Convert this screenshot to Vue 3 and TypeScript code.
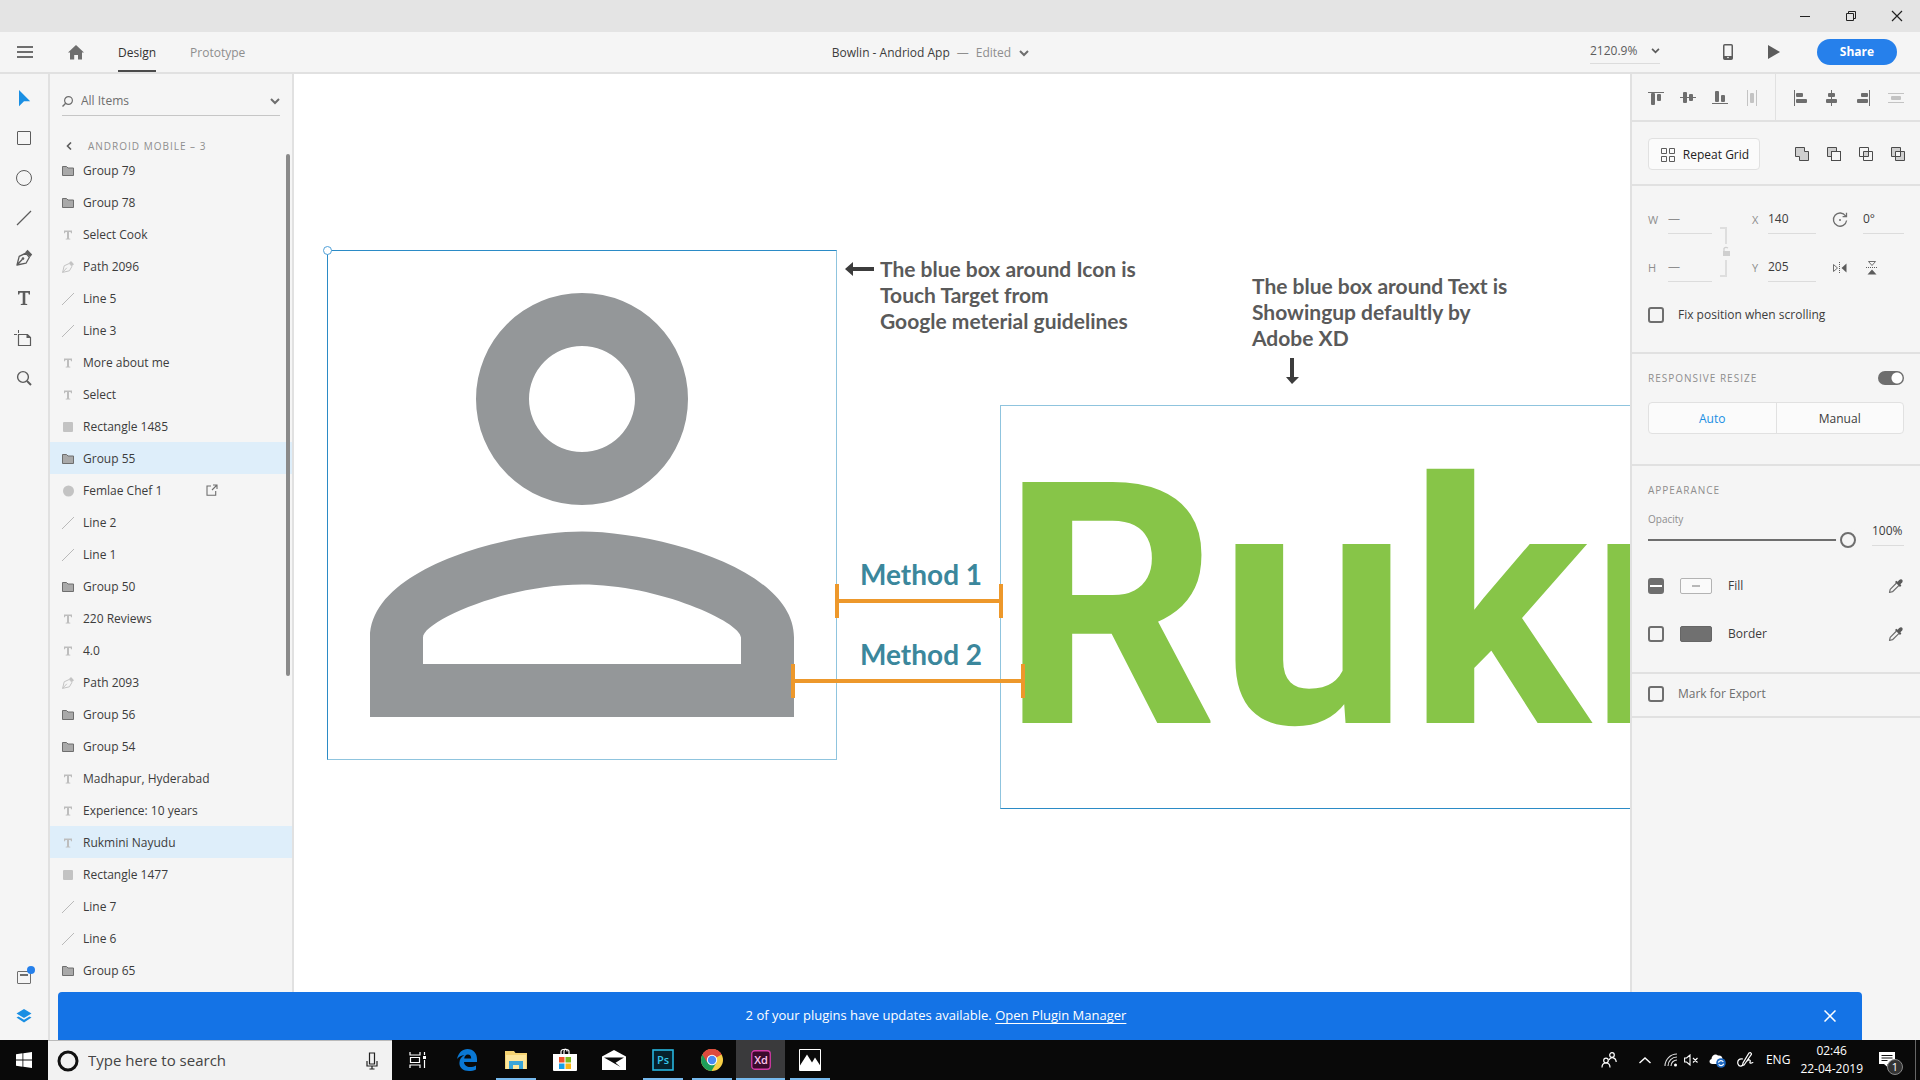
<script setup lang="ts">
import { ref } from 'vue'

type Kind = 'folder' | 'text' | 'pen' | 'line' | 'rect' | 'ellipse'
interface Layer { name: string; kind: Kind; selected?: boolean; linked?: boolean }

const layers: Layer[] = [
  { name: 'Group 79', kind: 'folder' },
  { name: 'Group 78', kind: 'folder' },
  { name: 'Select Cook', kind: 'text' },
  { name: 'Path 2096', kind: 'pen' },
  { name: 'Line 5', kind: 'line' },
  { name: 'Line 3', kind: 'line' },
  { name: 'More about me', kind: 'text' },
  { name: 'Select', kind: 'text' },
  { name: 'Rectangle 1485', kind: 'rect' },
  { name: 'Group 55', kind: 'folder', selected: true },
  { name: 'Femlae Chef 1', kind: 'ellipse', linked: true },
  { name: 'Line 2', kind: 'line' },
  { name: 'Line 1', kind: 'line' },
  { name: 'Group 50', kind: 'folder' },
  { name: '220 Reviews', kind: 'text' },
  { name: '4.0', kind: 'text' },
  { name: 'Path 2093', kind: 'pen' },
  { name: 'Group 56', kind: 'folder' },
  { name: 'Group 54', kind: 'folder' },
  { name: 'Madhapur, Hyderabad', kind: 'text' },
  { name: 'Experience: 10 years', kind: 'text' },
  { name: 'Rukmini Nayudu', kind: 'text', selected: true },
  { name: 'Rectangle 1477', kind: 'rect' },
  { name: 'Line 7', kind: 'line' },
  { name: 'Line 6', kind: 'line' },
  { name: 'Group 65', kind: 'folder' },
]

const tools = ['select', 'rect', 'ellipse', 'line', 'pen', 'text', 'artboard', 'zoom']
const alignVertical = ['top', 'middle', 'bottom', 'spread-h']
const alignHorizontal = ['left', 'center', 'right', 'spread-v']
const booleans = ['add', 'subtract', 'intersect', 'exclude']

const filter = ref('All Items')
const opacity = ref(100)
const responsive = ref(true)
</script>

<template>
  <div class="window">
    <svg class="defs" aria-hidden="true">
      <symbol id="chevron" viewBox="0 0 10 7"><path d="M1 1l4 4 4-4" fill="none" stroke="currentColor" stroke-width="2" /></symbol>
      <symbol id="t-select" viewBox="0 0 24 24"><path d="M7 4v16.200l5-5h6.200z" fill="#1a8fe3" /></symbol>
      <symbol id="t-rect" viewBox="0 0 24 24"><rect x="5.500" y="5.500" width="13" height="13" rx=".5" fill="none" stroke="currentColor" /></symbol>
      <symbol id="t-ellipse" viewBox="0 0 24 24"><circle cx="12" cy="12" r="7.500" fill="none" stroke="currentColor" /></symbol>
      <symbol id="t-line" viewBox="0 0 24 24"><path d="M5 19L19 5" stroke="currentColor" stroke-width="1.200" /></symbol>
      <symbol id="t-pen" viewBox="0 0 24 24">
        <path d="M5 19l2.200-8.600 6.600-3.200 3.600 4-3.400 6z M5 19l5.400-5.800" fill="none" stroke="currentColor" stroke-width="1.300" stroke-linejoin="round" />
        <circle cx="11" cy="12.600" r="1.300" fill="currentColor" /><path d="M13.200 6.200l2.300-2.400 4.700 4.600-2 2.700z" fill="currentColor" />
      </symbol>
      <symbol id="t-text" viewBox="0 0 24 24"><path d="M6 5h12v3.600h-1.200l-.6-1.800H13.300v11l1.900.2V19H8.800v-1l1.900-.2v-11H7.800l-.6 1.800H6z" fill="currentColor" /></symbol>
      <symbol id="t-artboard" viewBox="0 0 24 24">
        <path d="M6.500 8.500h9l3 3v8h-12z" fill="none" stroke="currentColor" stroke-width="1.200" /><path d="M14.500 8v4H19zM6 4h1v3H6zM2 8h3v1H2z" fill="currentColor" />
      </symbol>
      <symbol id="t-zoom" viewBox="0 0 24 24"><circle cx="11" cy="11" r="5.400" fill="none" stroke="currentColor" stroke-width="1.400" /><path d="M15 15l4 4" stroke="currentColor" stroke-width="2" /></symbol>
      <symbol id="l-folder" viewBox="0 0 12 12"><path d="M.5 1.500h4l1.500 1.500h5.500v7.500H.5z" fill="#a9a9a9" stroke="#6e6e6e" /></symbol>
      <symbol id="l-text" viewBox="0 0 12 12"><path d="M2 1.500h8v2.800H9l-.4-1.400H7v6.500l1.300.3v.8H3.700v-.8L5 9.400V2.900H3.400L3 4.300H2z" fill="#bdbdbd" /></symbol>
      <symbol id="l-pen" viewBox="0 0 12 12"><path d="M.6 11.400l1.600-6.600 5-2.300L10 5.300l-2.600 4.500zM.6 11.400l4.200-4.600" fill="none" stroke="#c3c3c3" /><path d="M7 2l2-2 3 3.200L10 5z" fill="#c3c3c3" /></symbol>
      <symbol id="l-line" viewBox="0 0 12 12"><path d="M0 12L12 0" stroke="#b9b9b9" /></symbol>
      <symbol id="l-rect" viewBox="0 0 12 12"><rect x="1" y="1" width="10" height="10" rx="1" fill="#c3c3c3" /></symbol>
      <symbol id="l-ellipse" viewBox="0 0 12 12"><circle cx="6.500" cy="6" r="5.500" fill="#c3c3c3" /></symbol>
      <symbol id="a-top" viewBox="0 0 16 16"><path d="M0 2h16v1H0z" fill="currentColor" /><rect x="3" y="3" width="4" height="12" rx="1" fill="currentColor" /><rect x="9" y="4" width="4" height="7" rx="1" fill="currentColor" /></symbol>
      <symbol id="a-middle" viewBox="0 0 16 16"><path d="M0 7h16v1H0z" fill="currentColor" /><rect x="3" y="2" width="4" height="11" rx="1" fill="currentColor" /><rect x="9" y="4" width="4" height="7" rx="1" fill="currentColor" /></symbol>
      <symbol id="a-bottom" viewBox="0 0 16 16"><path d="M0 13h16v1H0z" fill="currentColor" /><rect x="3" y="1" width="4" height="11" rx="1" fill="currentColor" /><rect x="9" y="5" width="4" height="7" rx="1" fill="currentColor" /></symbol>
      <symbol id="a-spread-h" viewBox="0 0 16 16"><path d="M3 0h1v16H3zM12 0h1v16h-1z" fill="#c3c3c3" /><rect x="6" y="3" width="4" height="10" rx="1" fill="#c3c3c3" /></symbol>
      <symbol id="a-left" viewBox="0 0 16 16"><path d="M2 0h1v16H2z" fill="currentColor" /><rect x="4" y="3" width="7" height="4" rx="1" fill="currentColor" /><rect x="4" y="9" width="11" height="4" rx="1" fill="currentColor" /></symbol>
      <symbol id="a-center" viewBox="0 0 16 16"><path d="M7 0h1v16H7z" fill="currentColor" /><rect x="4" y="3" width="7" height="4" rx="1" fill="currentColor" /><rect x="2" y="9" width="11" height="4" rx="1" fill="currentColor" /></symbol>
      <symbol id="a-right" viewBox="0 0 16 16"><path d="M13 0h1v16h-1z" fill="currentColor" /><rect x="5" y="3" width="7" height="4" rx="1" fill="currentColor" /><rect x="1" y="9" width="11" height="4" rx="1" fill="currentColor" /></symbol>
      <symbol id="a-spread-v" viewBox="0 0 16 16"><path d="M0 3h16v1H0zM0 12h16v1H0z" fill="#c3c3c3" /><rect x="3" y="6" width="10" height="4" rx="1" fill="#c3c3c3" /></symbol>
      <symbol id="b-add" viewBox="0 0 16 16"><path d="M1.500 1.500h9v4h4v9h-9v-4h-4z" fill="#cfcfcf" stroke="#4b4b4b" stroke-linejoin="round" /></symbol>
      <symbol id="b-subtract" viewBox="0 0 16 16"><path d="M1.500 1.500h9v4h-5v5h-4z" fill="#cfcfcf" stroke="#4b4b4b" /><rect x="5.500" y="5.500" width="9" height="9" fill="#f5f5f5" stroke="#4b4b4b" /></symbol>
      <symbol id="b-intersect" viewBox="0 0 16 16"><path d="M5.500 5.500h5v5h-5z" fill="#cfcfcf" /><path d="M1.500 1.500h9v9h-9zM5.500 5.500h9v9h-9z" fill="none" stroke="#4b4b4b" /></symbol>
      <symbol id="b-exclude" viewBox="0 0 16 16"><path d="M1.500 1.500h9v9h-9zM5.500 5.500h9v9h-9z" fill="#cfcfcf" /><path d="M5.500 5.500h5v5h-5z" fill="#f5f5f5" /><path d="M1.500 1.500h9v9h-9zM5.500 5.500h9v9h-9z" fill="none" stroke="#4b4b4b" /></symbol>
      <symbol id="dropper" viewBox="0 0 16 16"><path d="M8.500 5L2.200 11.300 1.500 14.500l3-.8L11 7.400" fill="none" stroke="#6e6e6e" stroke-width="1.200" stroke-linejoin="round" /><path d="M7 4l1.300-1.200 1.300 1L11.200 2c2-2 4.600 0 3 2.400L12.400 6.200l1 1.300L12 8.900z" fill="#5a5a5a" /></symbol>
    </svg>

    <div class="titlebar">
      <button aria-label="Minimize"><svg width="12" height="12" viewBox="0 0 12 12"><path d="M1 6.500h10" stroke="#222" /></svg></button>
      <button aria-label="Restore"><svg width="12" height="12" viewBox="0 0 12 12"><path d="M1.500 3.500h7v7h-7zM3.500 3.500v-2h7v7h-2" fill="none" stroke="#222" /></svg></button>
      <button aria-label="Close"><svg width="12" height="12" viewBox="0 0 12 12"><path d="M1 1l10 10M11 1L1 11" stroke="#222" stroke-width="1.200" /></svg></button>
    </div>

    <header class="header">
      <div class="header-side">
        <button class="menu" aria-label="Menu"><svg width="16" height="12" viewBox="0 0 16 12"><path d="M0 1h16M0 6h16M0 11h16" stroke="#6e6e6e" stroke-width="2" /></svg></button>
        <button class="home" aria-label="Home"><svg width="16" height="15" viewBox="0 0 16 15"><path d="M8 0l8 7.600h-2V14.500h-4V10H6.200v4.500H2V7.600H0z" fill="#6e6e6e" /></svg></button>
        <button class="mode current">Design</button>
        <button class="mode">Prototype</button>
      </div>
      <div class="doc">
        <span>Bowlin - Andriod App</span><span class="muted">—</span><span class="muted">Edited</span>
        <button aria-label="Document menu"><svg width="10" height="7"><use href="#chevron" /></svg></button>
      </div>
      <div class="header-side end">
        <div class="zoom">
          <select aria-label="Zoom level"><option>2120.9%</option></select>
          <svg width="9" height="6"><use href="#chevron" /></svg>
        </div>
        <button class="device" aria-label="Device preview"><svg width="10" height="16" viewBox="0 0 10 16"><rect x=".75" y=".75" width="8.500" height="14.500" rx="1" fill="none" stroke="#5c5c5c" stroke-width="1.500" /><path d="M1 12h8v3H1z" fill="#5c5c5c" /><circle cx="5" cy="13.500" r=".8" fill="#fff" /></svg></button>
        <button class="play" aria-label="Play"><svg width="12" height="14" viewBox="0 0 12 14"><path d="M0 0l12 7-12 7z" fill="#5c5c5c" /></svg></button>
        <button class="share">Share</button>
      </div>
    </header>

    <main class="body">
      <nav class="rail">
        <button v-for="tool in tools" :key="tool" :aria-label="tool"><svg width="24" height="24"><use :href="'#t-' + tool" /></svg></button>
        <button class="push" aria-label="Plugins">
          <svg width="24" height="24" viewBox="0 0 24 24"><rect x="5.500" y="7.500" width="13" height="12" rx=".5" fill="none" stroke="#6e6e6e" /><path d="M8 11h8" stroke="#6e6e6e" stroke-width="2" /><circle cx="19" cy="6" r="4" fill="#2680eb" /></svg>
        </button>
        <button aria-label="Layers">
          <svg width="24" height="24" viewBox="0 0 24 24"><path d="M12 5l7.500 4.500L12 14 4.500 9.500zM4.500 13.600l2-1.100L12 15.800l5.500-3.300 2 1.100L12 18.500z" fill="#1a8fe3" /></svg>
        </button>
      </nav>

      <aside class="layers">
        <div class="filter">
          <svg width="11" height="11" viewBox="0 0 11 11"><circle cx="6.500" cy="4.500" r="3.900" fill="none" stroke="#6e6e6e" stroke-width="1.200" /><path d="M3.700 7.300L.5 10.500" stroke="#6e6e6e" stroke-width="1.400" /></svg>
          <input v-model="filter" aria-label="Filter layers" />
          <button aria-label="Filter options"><svg width="10" height="7"><use href="#chevron" /></svg></button>
        </div>
        <div class="crumb">
          <button aria-label="Back"><svg width="6" height="8" viewBox="0 0 6 8"><path d="M5 .5L1.500 4 5 7.500" fill="none" stroke="#5c5c5c" stroke-width="1.600" /></svg></button>
          <span>ANDROID MOBILE – 3</span>
        </div>
        <ul class="list">
          <li v-for="layer in layers" :key="layer.name" :class="{ selected: layer.selected }">
            <svg width="12" height="12"><use :href="'#l-' + layer.kind" /></svg>
            <span>{{ layer.name }}</span>
            <svg v-if="layer.linked" class="linked" width="12" height="12" viewBox="0 0 12 12"><path d="M5 2H1v9.300h8.700V7M7 1h4v4M11 1L6 6" fill="none" stroke="#6e6e6e" stroke-width="1.100" /></svg>
          </li>
        </ul>
        <div class="scrollbar"></div>
      </aside>

      <section class="canvas">
        <div class="touch-target"></div>
        <svg class="person" width="424" height="424" viewBox="4 4 16 16">
          <path fill="#949799" fill-rule="evenodd" d="M12 4a4 4 0 1 1 0 8 4 4 0 0 1 0-8zm0 2a2 2 0 1 0 0 4 2 2 0 0 0 0-4zM12 13c-2.670 0-8 1.340-8 4v3h16v-3c0-2.660-5.330-4-8-4zm0 2c2.900 0 6 1.420 6 2v1H6v-1c0-.6 3.100-2 6-2z" />
        </svg>
        <div class="name-box">Rukm</div>
        <svg class="marks" width="1336" height="918" viewBox="294 74 1336 918">
          <g stroke="#ed982b" stroke-width="4" fill="none">
            <path d="M837 584v34M1001 584v34M837 601h164" />
            <path d="M793 664v34M1023 664v34M793 681h230" />
          </g>
          <path d="M845 269l8-7v5h21v4h-21v5z" fill="#3c3c3c" />
          <path d="M1290 358h4v19h5l-7 7-6-7h4z" fill="#3c3c3c" />
          <circle cx="327.500" cy="250.500" r="4" fill="#fff" stroke="#4fa0d8" />
        </svg>
        <p class="note icon-note">The blue box around Icon is<br />Touch Target from<br />Google meterial guidelines</p>
        <p class="note text-note">The blue box around Text is<br />Showingup defaultly by<br />Adobe XD</p>
        <p class="method first">Method 1</p>
        <p class="method second">Method 2</p>
      </section>

      <aside class="inspector">
        <div class="align">
          <div class="align-group"><button v-for="a in alignVertical" :key="a" :aria-label="a"><svg width="16" height="16"><use :href="'#a-' + a" /></svg></button></div>
          <div class="align-group"><button v-for="a in alignHorizontal" :key="a" :aria-label="a"><svg width="16" height="16"><use :href="'#a-' + a" /></svg></button></div>
        </div>

        <div class="repeat">
          <button class="repeat-grid">
            <svg width="14" height="14" viewBox="0 0 14 14"><path d="M.5.5h5v5h-5zM8.500.5h5v5h-5zM.5 8.500h5v5h-5zM8.500 8.500h5v5h-5z" fill="none" stroke="#5c5c5c" /></svg>
            Repeat Grid
          </button>
          <div class="ops"><button v-for="b in booleans" :key="b" :aria-label="b"><svg width="16" height="16"><use :href="'#b-' + b" /></svg></button></div>
        </div>

        <div class="geometry">
          <div class="transform">
            <div class="pair size">
              <label><span>W</span><input value="—" /></label>
              <label><span>H</span><input value="—" /></label>
            </div>
            <svg class="lock" width="10" height="50" viewBox="0 0 10 50"><path d="M0 1h6v16M0 49h6V33" fill="none" stroke="#dedede" stroke-width="2" /><path d="M3 24h7v5H3z" fill="#cfcfcf" /><path d="M4 24v-2.500q1.500-2 4-.5" fill="none" stroke="#cfcfcf" stroke-width="1.300" /></svg>
            <div class="pair place">
              <label><span>X</span><input value="140" /></label>
              <label><span>Y</span><input value="205" /></label>
            </div>
            <div class="pair turn">
              <label aria-label="Rotation">
                <svg width="16" height="16" viewBox="0 0 16 16"><path d="M13.600 4A6.600 6.600 0 1 0 14.600 8.500M14.500.8v3.900h-3.900" fill="none" stroke="#6e6e6e" stroke-width="1.300" /><circle cx="8" cy="8" r="1" fill="#6e6e6e" /></svg>
                <input value="0°" />
              </label>
              <div class="flips">
                <button aria-label="Flip horizontally"><svg width="16" height="16" viewBox="0 0 16 16"><path d="M1.500 4.500v7l4-3.500z" fill="none" stroke="#6e6e6e" /><path d="M14.500 3.500v9L9.500 8z" fill="#5c5c5c" /><path d="M7.500 2v12" stroke="#5c5c5c" stroke-dasharray="1 1" /></svg></button>
                <button aria-label="Flip vertically"><svg width="16" height="16" viewBox="0 0 16 16"><path d="M4.500 1.500h7L8 5.500z" fill="none" stroke="#6e6e6e" /><path d="M3.500 14.500h9L8 9.500z" fill="#5c5c5c" /><path d="M2 7.500h12" stroke="#5c5c5c" stroke-dasharray="1 1" /></svg></button>
              </div>
            </div>
          </div>
          <label class="check"><input type="checkbox" />Fix position when scrolling</label>
        </div>

        <div class="responsive">
          <div class="heading-row"><h2 id="resize">RESPONSIVE RESIZE</h2><input v-model="responsive" type="checkbox" class="switch" aria-labelledby="resize" /></div>
          <div class="segments"><button class="on">Auto</button><button>Manual</button></div>
        </div>

        <div class="appearance">
          <h2>APPEARANCE</h2>
          <div class="opacity">
            <div class="slider"><label for="opacity">Opacity</label><input id="opacity" v-model.number="opacity" type="range" min="0" max="100" /></div>
            <input class="value" :value="opacity + '%'" aria-label="Opacity value" />
          </div>
          <div class="paint">
            <input id="fill" type="checkbox" class="mixed" :indeterminate.prop="true" />
            <button class="swatch empty" aria-label="Fill colour"></button>
            <label for="fill">Fill</label>
            <button class="pick" aria-label="Pick fill"><svg width="16" height="16"><use href="#dropper" /></svg></button>
          </div>
          <div class="paint">
            <input id="border" type="checkbox" />
            <button class="swatch" aria-label="Border colour"></button>
            <label for="border">Border</label>
            <button class="pick" aria-label="Pick border"><svg width="16" height="16"><use href="#dropper" /></svg></button>
          </div>
        </div>

        <div class="export"><label class="check"><input type="checkbox" />Mark for Export</label></div>
      </aside>
    </main>

    <div class="banner">
      <p>2 of your plugins have updates available. <a href="#">Open Plugin Manager</a></p>
      <button aria-label="Dismiss"><svg width="12" height="12" viewBox="0 0 12 12"><path d="M.5.5l11 11M11.500.5l-11 11" stroke="#fff" stroke-width="1.500" /></svg></button>
    </div>

    <footer class="taskbar">
      <button class="start" aria-label="Start"><svg width="16" height="16" viewBox="0 0 16 16"><path d="M0 2.200L6.500 1.300v6.300H0zM7.300 1.200L16 0v7.600H7.300zM0 8.400h6.500v6.300L0 13.800zM7.300 8.400H16V16l-8.700-1.200z" fill="#fff" /></svg></button>
      <div class="search">
        <svg width="22" height="22" viewBox="0 0 22 22"><circle cx="11" cy="11" r="9" fill="none" stroke="#111" stroke-width="3" /></svg>
        <input placeholder="Type here to search" aria-label="Search" />
        <svg width="12" height="18" viewBox="0 0 12 18"><path d="M3.500 1h5v11h-5zM1 9v5h10V9M6 14v3M3.500 17h5" fill="none" stroke="#222" stroke-width="1.200" /></svg>
      </div>
      <div class="apps">
        <button aria-label="Task view"><svg width="18" height="16" viewBox="0 0 18 16"><path d="M1 0v3h10V0M1.500 5.500h9v5h-9zM1 16v-3h10v3M15.500 0v3M15.500 8v8" fill="none" stroke="#fff" stroke-width="1.200" /><path d="M14 4h3v3h-3z" fill="#fff" /></svg></button>
        <button aria-label="Edge"><svg width="20" height="22" viewBox="0 0 20 22"><path d="M0 10C1.500 3.500 5.500 0 10.500 0 16.500 0 20 4.500 20 10v3H7c.2 3.500 3 5 6 5 2.200 0 4.300-.6 6-1.600V20.500c-2 1-4.500 1.500-7 1.500C6 22 2.400 18.500 2.400 14c0-3.500 2-6.500 5-8C4.500 6.300 1.800 7.800 0 10zM7.200 9.500h7C14.200 7 13 5.500 10.900 5.500 8.800 5.500 7.400 7.500 7.200 9.500z" fill="#0a78d4" /></svg></button>
        <button class="open" aria-label="Explorer"><svg width="22" height="20" viewBox="0 0 22 20"><path d="M0 1h9l1.500 2H22v16H0z" fill="#f5d372" /><path d="M1 5h20v14H1z" fill="#fde69c" /><path d="M4 19v-8h14v8h-4v-4H8v4z" fill="#3aa5d8" /></svg></button>
        <button aria-label="Store"><svg width="24" height="24" viewBox="0 0 24 24"><path d="M8 7V3.500C8 .5 16 .5 16 3.500V7M11 7V3.500C11 1 14 0 14 3.500" fill="none" stroke="#fff" stroke-width="1.200" /><path d="M0 6h24v16q0 1-1 1H1q-1 0-1-1z" fill="#fff" /><path d="M6 9h5.500v5.500H6z" fill="#f0502a" /><path d="M12.500 9H18v5.500h-5.500z" fill="#7cb81c" /><path d="M6 15.500h5.500V21H6z" fill="#149fe8" /><path d="M12.500 15.500H18V21h-5.500z" fill="#f9b516" /></svg></button>
        <button aria-label="Mail"><svg width="24" height="20" viewBox="0 0 24 20"><path d="M0 6.500L12 0l12 6.500V20H0z" fill="#fff" /><path d="M2 7.500h20l-8.500 5.200 5 4.300z" fill="#0a0a0a" /></svg></button>
        <button class="open" aria-label="Photoshop"><svg width="22" height="22" viewBox="0 0 22 22"><rect x="1" y="1" width="20" height="20" fill="#06212b" stroke="#27b6df" stroke-width="1.600" /><text x="11" y="15" text-anchor="middle" font-size="11" font-weight="600" fill="#35c5ea">Ps</text></svg></button>
        <button class="open" aria-label="Chrome"><svg width="22" height="22" viewBox="0 0 22 22"><circle cx="11" cy="11" r="11" fill="#f7cf46" /><path d="M11 11L1.500 5.500A11 11 0 0 1 20.500 5.500z" fill="#dd4b3e" /><path d="M1.500 5.500A11 11 0 0 0 10.500 22l5-8.500L11 11z" fill="#1e9e5a" /><path d="M11 5.800h9.700A11 11 0 0 0 1.500 5.500L6 13z" fill="#dd4b3e" /><circle cx="11" cy="11" r="5.200" fill="#fff" /><circle cx="11" cy="11" r="4.200" fill="#4a8af4" /></svg></button>
        <button class="open active" aria-label="XD"><svg width="20" height="20" viewBox="0 0 20 20"><rect x=".75" y=".75" width="18.500" height="18.500" rx="3" fill="#3b0a2c" stroke="#d63aa8" stroke-width="1.300" /><text x="10" y="14" text-anchor="middle" font-size="11" font-weight="600" fill="#ffc4ee">Xd</text></svg></button>
        <button class="open" aria-label="Photos"><svg width="22" height="22" viewBox="0 0 22 22"><path d="M.5.5h21v21H.5z" fill="#0a0a0a" stroke="#fff" /><path d="M1 21v-4.500L8 5.500l5 8 3-5 5.500 8.500v4z" fill="#fff" /></svg></button>
      </div>
      <div class="tray">
        <svg class="people" width="16" height="16" viewBox="0 0 16 16"><g fill="none" stroke="#fff" stroke-width="1.200"><circle cx="5" cy="8.500" r="2.300" /><path d="M1 15.500c0-6 8-6 8 0" /><circle cx="11" cy="3" r="2.300" /><path d="M8 8c1.500-3.500 7-3 7.200 2" /></g></svg>
        <svg class="up" width="12" height="7" viewBox="0 0 12 7"><path d="M.5 6L6 1l5.500 5" fill="none" stroke="#fff" stroke-width="1.400" /></svg>
        <svg class="wifi" width="14" height="14" viewBox="0 0 14 14"><g fill="none" stroke="#ddd" stroke-width="1.100"><path d="M1 13A12 12 0 0 1 13 1M4 13a9 9 0 0 1 9-9M7 13a6 6 0 0 1 6-6" /></g><circle cx="11.500" cy="12" r="1.500" fill="#fff" /></svg>
        <svg width="14" height="12" viewBox="0 0 14 12"><path d="M.6 4h2L6 1v10L2.600 8h-2zM9 4l4.500 4.500M13.500 4L9 8.500" fill="none" stroke="#fff" stroke-width="1.100" /></svg>
        <svg width="17" height="15" viewBox="0 0 17 15"><path d="M3.500 11C0 11-.5 7 2.500 6 2.500 2.500 6.500 0 9 2.500c3-.5 4.500 1.500 4.500 3.500L9 11z" fill="#fff" /><circle cx="12" cy="10" r="4.800" fill="#1b66c0" /><path d="M9.300 9.500c.8-2.500 4-2.500 5-.5M14.700 10.800c-.8 2.300-4 2.500-5 .4" fill="none" stroke="#fff" stroke-width="1.200" /></svg>
        <svg width="17" height="16" viewBox="0 0 17 16"><path d="M6 7C2 6 0 9 1 12s5 3 5-1l6-10c2-1 3 1 2 2L7 13l-1.500.5M10 9c2-2 4-1 3 1s3 1 3 0" fill="none" stroke="#fff" stroke-width="1.200" /></svg>
        <span class="lang">ENG</span>
        <div class="clock"><span>02:46</span><span>22-04-2019</span></div>
        <div class="notice">
          <svg width="16" height="15" viewBox="0 0 16 15"><path d="M0 0h16v12H8.500v3L5 12H0z" fill="#fff" /><path d="M2.500 3.500h11M2.500 6h11M2.500 8.500h6" stroke="#111" /></svg>
          <span>1</span>
        </div>
      </div>
    </footer>
  </div>
</template>

<style>
html, body { margin: 0; background: #f5f5f5; }
</style>

<style scoped>
.window { position: relative; display: flex; flex-direction: column; height: 100vh; overflow: hidden; font-family: "Open Sans", "Noto Sans", sans-serif; font-size: 12px; line-height: 16px; color: #3c3c3c; background: #f5f5f5; }
.window * { box-sizing: border-box; }
.defs { position: absolute; width: 0; height: 0; }
svg { display: block; flex: none; }
p, h2, ul { margin: 0; padding: 0; }
button { display: flex; align-items: center; justify-content: center; padding: 0; border: 0; background: none; color: inherit; font: inherit; white-space: nowrap; }
input, select { min-width: 0; margin: 0; padding: 0; border: 0; border-radius: 0; outline: 0; background: none; color: inherit; font: inherit; appearance: none; }

.titlebar { display: flex; flex: none; justify-content: flex-end; height: 32px; background: #e4e4e4; }
.titlebar button { width: 46px; }

.header { display: flex; flex: none; height: 42px; border-bottom: 2px solid #e1e1e1; }
.header-side { display: flex; flex: 1; align-items: center; }
.menu { width: 16px; margin-left: 17px; }
.home { width: 16px; margin-left: 35px; }
.mode { height: 40px; margin-left: 34px; padding-top: 4px; border-bottom: 2px solid transparent; color: #8e8e8e; }
.mode.current { color: #323232; border-color: #4b4b4b; }
.doc { display: flex; align-items: center; gap: 7px; margin-right: 58px; padding-top: 2px; }
.doc .muted { color: #8e8e8e; }
.doc button { width: 12px; color: #6e6e6e; }
.header-side.end { justify-content: flex-end; }
.zoom { display: flex; align-items: center; width: 70px; height: 24px; padding-bottom: 2px; border-bottom: 1px solid #dcdcdc; color: #5c5c5c; }
.zoom select { flex: 1; }
.device { width: 16px; margin-left: 60px; }
.play { width: 16px; margin-left: 30px; }
.share { width: 80px; height: 26px; margin: 0 23px 0 35px; border-radius: 13px; background: #2680eb; color: #fff; font-weight: 700; }

.body { display: flex; flex: 1; min-height: 0; }
.rail { display: flex; flex: none; flex-direction: column; width: 50px; padding: 4px 0; border-right: 2px solid #e1e1e1; color: #5c5c5c; }
.rail button { height: 40px; }
.rail .push { margin-top: auto; }

.layers { position: relative; flex: none; width: 244px; border-right: 2px solid #e1e1e1; }
.filter { display: flex; align-items: center; height: 28px; margin: 14px 12px 0; border-bottom: 1px solid #c6c6c6; color: #6e6e6e; }
.filter input { flex: 1; margin-left: 8px; padding-bottom: 2px; }
.crumb { display: flex; align-items: center; height: 20px; margin-top: 20px; padding-left: 16px; font-size: 10px; letter-spacing: 1px; color: #8e8e8e; }
.crumb span { margin-left: 16px; }
.list { margin-top: -2px; list-style: none; }
.list li { display: flex; align-items: center; height: 32px; padding: 2px 0 0 12px; white-space: nowrap; }
.list li span { margin-left: 9px; }
.list .selected { background: #deeefa; }
.list .linked { margin: 0 0 2px 44px; }
.scrollbar { position: absolute; top: 80px; right: 2px; width: 4px; height: 522px; border-radius: 2px; background: #8a8a8a; }

.canvas { position: relative; flex: 1; overflow: hidden; background: #fff; }
.touch-target { position: absolute; left: 33px; top: 176px; width: 510px; height: 510px; border: 1px solid #8fc4de; border-top-color: #2b8bc6; border-left-color: #2b8bc6; }
.person { position: absolute; left: 76px; top: 219px; }
.name-box { position: absolute; left: 706px; right: -8px; top: 331px; height: 404px; border: 1px solid #8fc4de; border-bottom-color: #2b8bc6; font: 700 339px/402px Roboto, sans-serif; color: #87c548; white-space: nowrap; }
.marks { position: absolute; left: 0; top: 0; }
.note { position: absolute; font: 700 21px/26px Lato, sans-serif; color: #5a5a5a; white-space: nowrap; }
.icon-note { left: 586px; top: 182px; }
.text-note { left: 958px; top: 199px; }
.method { position: absolute; left: 566px; font: 700 28px/34px Lato, sans-serif; color: #3b879c; white-space: nowrap; }
.first { top: 483px; }
.second { top: 563px; }

.inspector { flex: none; width: 290px; border-left: 2px solid #e1e1e1; }
.inspector > div { border-bottom: 2px solid #e1e1e1; }
.align { display: flex; height: 48px; color: #6e6e6e; }
.align-group { display: flex; flex: none; width: 143px; padding: 2px 0 0 8px; }
.align-group + .align-group { width: 145px; border-left: 1px solid #e1e1e1; }
.align-group button { width: 32px; }
.repeat { display: flex; align-items: center; justify-content: space-between; height: 64px; padding: 2px 6px 0 16px; }
.repeat-grid { gap: 8px; width: 112px; height: 32px; padding: 2px 0 0 2px; border: 1px solid #e1e1e1; border-radius: 4px; background: #fbfbfb; color: #222; }
.ops { display: flex; }
.ops button { width: 32px; }
.geometry { height: 168px; padding: 24px 16px 0; }
.transform { display: flex; height: 96px; }
.pair { display: flex; flex-direction: column; gap: 24px; }
.pair label { display: flex; align-items: center; height: 24px; }
.pair label span { padding-bottom: 4px; color: #8e8e8e; font-size: 11px; }
.pair input { flex: 1; height: 24px; padding-bottom: 7px; border-bottom: 1px solid #dcdcdc; }
.pair span { width: 16px; }
.size { width: 64px; }
.size label span { width: 20px; }
.size input { color: #8e8e8e; }
.lock { margin: 17px 0 0 8px; }
.place { width: 64px; margin-left: 22px; }
.turn { width: 72px; margin-left: 16px; }
.turn svg { flex: none; margin-bottom: 4px; }
.turn input { margin-left: 15px; }
.flips { display: flex; gap: 16px; height: 24px; }
.check { display: flex; align-items: center; gap: 14px; }
input[type="checkbox"] { flex: none; width: 16px; height: 16px; border: 2px solid #6e6e6e; border-radius: 3px; }
input.mixed { background: linear-gradient(#fff, #fff) center / 12px 2px no-repeat #6e6e6e; }
.geometry .check { height: 18px; }
.responsive { height: 112px; padding: 12px 16px 0; }
h2 { font-size: 10px; font-weight: 400; letter-spacing: 1px; line-height: 16px; color: #8e8e8e; }
.heading-row { display: flex; align-items: center; justify-content: space-between; height: 24px; }
input.switch { width: 26px; height: 14px; border: 0; border-radius: 7px; background: radial-gradient(circle at 19px 7px, #fff 5px, transparent 6px) #6e6e6e; }
.segments { display: flex; height: 32px; margin-top: 12px; border: 1px solid #e1e1e1; border-radius: 4px; background: #fbfbfb; }
.segments button { flex: 1; padding-top: 2px; }
.segments button + button { border-left: 1px solid #e1e1e1; }
.segments .on { color: #1a8fe3; }
.appearance { height: 208px; padding: 16px 16px 0; }
.opacity { display: flex; justify-content: space-between; height: 52px; margin-top: 12px; }
.slider { display: flex; flex-direction: column; width: 208px; }
.slider label { font-size: 10px; line-height: 18px; color: #8e8e8e; }
.slider input { width: 100%; height: 24px; background: linear-gradient(#6e6e6e, #6e6e6e) center / 100% 2px no-repeat; }
.slider input::-webkit-slider-thumb { appearance: none; width: 16px; height: 16px; border: 2px solid #6e6e6e; border-radius: 8px; background: #f5f5f5; box-shadow: 0 0 0 4px #f5f5f5; }
.value { width: 32px; height: 24px; margin-top: 12px; padding-bottom: 6px; border-bottom: 1px solid #dcdcdc; }
.paint { display: flex; align-items: center; height: 48px; }
.swatch { width: 32px; height: 16px; margin: 0 16px; border: 1px solid #666; border-radius: 2px; background: #707070; }
.swatch.empty { border-color: #b3b3b3; background: linear-gradient(#b8b8b8, #b8b8b8) center / 8px 2px no-repeat #fafafa; }
.pick { margin-left: auto; }
.export { display: flex; align-items: center; height: 44px; padding: 0 16px 2px; color: #6e6e6e; }

.banner { position: absolute; right: 58px; bottom: 40px; left: 58px; display: flex; align-items: center; justify-content: center; height: 48px; border-radius: 4px 4px 0 0; background: #1473e6; color: #fff; font-size: 13px; }
.banner p { padding: 0 48px 2px 0; }
.banner a { color: #fff; text-underline-offset: 3px; }
.banner button { position: absolute; right: 16px; width: 32px; height: 32px; }

.taskbar { display: flex; flex: none; height: 40px; background: #090909; color: #fff; }
.start { width: 48px; }
.search { display: flex; align-items: center; width: 344px; padding: 0 14px 0 9px; border-top: 1px solid #bbb; background: #f2f2f2; color: #444; font-size: 15px; }
.search input { flex: 1; margin-left: 9px; padding-bottom: 2px; }
.search input::placeholder { color: #444; opacity: 1; }
.apps { display: flex; padding-left: 1px; }
.apps button { width: 49px; }
.apps .open { background: linear-gradient(#76b9ed, #76b9ed) center bottom / 40px 2px no-repeat; }
.apps .active { background: linear-gradient(#76b9ed, #76b9ed) center bottom / 100% 2px no-repeat #3a3a3c; }
.tray { display: flex; align-items: center; margin-left: auto; padding-right: 4px; }
.tray > svg { margin-right: 11px; }
.tray > .people { margin-right: 22px; }
.tray > .up { margin-right: 13px; }
.tray > .wifi { margin-right: 6px; }
.lang { margin-left: 1px; }
.clock { display: flex; flex-direction: column; align-items: center; gap: 2px; margin-left: 10px; }
.notice { position: relative; width: 37px; height: 40px; margin-left: 16px; padding-top: 12px; border-right: 1px solid #666; }
.notice span { position: absolute; left: 8px; top: 19px; width: 16px; height: 16px; border: 1px solid #888; border-radius: 8px; background: #333; font-size: 11px; line-height: 14px; text-align: center; }
</style>
